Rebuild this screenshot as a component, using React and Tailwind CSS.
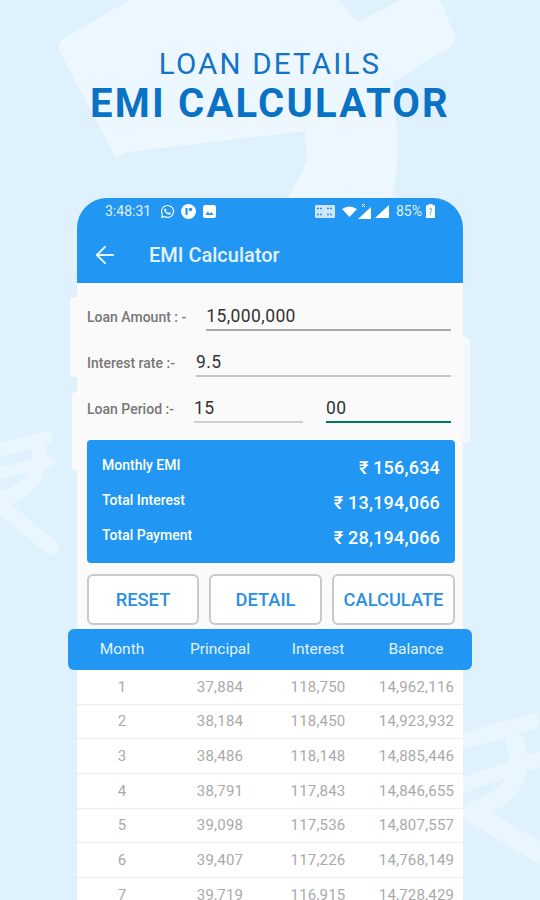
import React from "react";
import { ArrowLeft } from "lucide-react";
import { FaWhatsapp } from "react-icons/fa";

const rows = [
  ["1", "37,884", "118,750", "14,962,116"],
  ["2", "38,184", "118,450", "14,923,932"],
  ["3", "38,486", "118,148", "14,885,446"],
  ["4", "38,791", "117,843", "14,846,655"],
  ["5", "39,098", "117,536", "14,807,557"],
  ["6", "39,407", "117,226", "14,768,149"],
  ["7", "39,719", "116,915", "14,728,429"],
];

const summary = [
  ["Monthly EMI", "₹ 156,634"],
  ["Total Interest", "₹ 13,194,066"],
  ["Total Payment", "₹ 28,194,066"],
];

const buttons = [
  ["RESET", "w-[112px]"],
  ["DETAIL", "w-[113px]"],
  ["CALCULATE", "w-[123px]"],
];

// faint rupee signs behind the phone
const Backdrop = () => (
  <svg className="absolute inset-0" width="540" height="900" viewBox="0 0 540 900">
    <path
      d="M60 52 Q56 43 66 37 L130 0 L338 0 L358 22 L400 0 L440 0 L455 36 Q457 43 450 47 L393 82 L397 131 Q400 160 390 210 L282 210 L307 162 L305 131 L128 152 Q116 155 117 160 Z"
      fill="#edf7ff"
    />
    <g fill="none" stroke="#eaf6ff" strokeLinecap="round">
      <path d="M-10 452 L46 438" strokeWidth="13" />
      <path d="M-10 475 L50 462" strokeWidth="11" />
      <path d="M38 445 Q46 485 0 500" strokeWidth="15" />
      <path d="M0 505 L52 548" strokeWidth="15" />
      <path d="M460 742 L531 722" strokeWidth="16" />
      <path d="M460 786 L545 757" strokeWidth="15" />
      <path d="M515 743 Q530 790 473 812" strokeWidth="18" />
      <path d="M473 813 L545 856" strokeWidth="20" />
    </g>
    <rect x="70" y="297" width="20" height="80" rx="4" fill="#fafafa" />
    <rect x="72" y="392" width="20" height="78" rx="4" fill="#fafafa" />
    <path d="M455 337 L466 337 Q470 338 470 342 L470 442 L455 442 Z" fill="#f3f9fe" />
  </svg>
);

const Field = ({ label, children, className }) => (
  <div className={`flex items-end pr-[4px] ${className || ""}`}>
    <span className="text-[14px] font-medium text-[#777] pb-[3px]">{label}</span>
    {children}
  </div>
);

const inputClass = "border-b-2 text-[17.5px] leading-[26px] text-[#333] tracking-[0.4px]";

const StatusBar = () => (
  <div className="mt-[6px] flex items-center justify-between h-[14px] text-[14px] text-[#e3f2fd]">
    <div className="flex items-center">
      <span>3:48:31</span>
      <FaWhatsapp size={15} className="ml-[9px] text-white" />
      <svg className="ml-[6px]" width="15" height="15" viewBox="0 0 15 15">
        <circle cx="7.5" cy="7.5" r="7.5" fill="#fff" />
        <path d="M5.5 4v7" stroke="#2196f3" strokeWidth="2.2" />
        <circle cx="9.5" cy="5.5" r="1.8" fill="#2196f3" />
      </svg>
      <svg className="ml-[7px]" width="13" height="13" viewBox="0 0 13 13">
        <rect width="13" height="13" rx="2" fill="#fff" />
        <path d="M2.5 10l2.2-3.5 2 2.2 1.8-1.8 2 3.1z" fill="#2196f3" />
      </svg>
    </div>
    <div className="flex items-center">
      <svg width="20" height="13" viewBox="0 0 20 13">
        <rect width="20" height="13" rx="1" fill="#cfe6fb" />
        <path d="M2 3.5h6M12 3.5h6M2 9.5h6M12 9.5h6" stroke="#2196f3" strokeWidth="1.6" strokeDasharray="2 1" />
      </svg>
      <svg className="ml-[7px]" width="15" height="11" viewBox="0 0 15 11">
        <path d="M0 3 Q7.5 -2 15 3 L7.5 11Z" fill="#fff" />
      </svg>
      <svg width="14" height="15" viewBox="0 0 14 15">
        <path d="M14 3V15H1Z" fill="#fff" />
        <path d="M5 0l3 3M8 0L5 3" stroke="#fff" strokeWidth="0.9" />
      </svg>
      <svg className="ml-[4px]" width="14" height="13" viewBox="0 0 14 13">
        <path d="M14 0V13H0Z" fill="#fff" />
      </svg>
      <span className="ml-[7px]">85%</span>
      <svg className="ml-[4px]" width="9" height="14" viewBox="0 0 9 14">
        <path d="M2.5 0h4v1.2H9V14H0V1.2h2.5z" fill="#fff" />
        <path d="M3.2 5.2Q4.5 3.8 5.8 5.2Q6 6.4 4.5 7.6V9M4.5 10v1" fill="none" stroke="#2196f3" strokeWidth="0.9" />
      </svg>
    </div>
  </div>
);

export default function App() {
  return (
    <div className="relative w-[540px] h-[900px] overflow-hidden bg-[#dff1fd] font-['Roboto',sans-serif]">
      <Backdrop />
      <div className="relative flex flex-col items-center">
        <div className="mt-[46px] text-[29.5px] leading-[36px] tracking-[2.2px] text-[#1473c4]">LOAN DETAILS</div>
        <div className="mt-[1px] text-[40px] leading-[42px] tracking-[2.2px] font-bold text-[#0a72c4]">EMI CALCULATOR</div>

        <div className="mt-[73px] w-[386px] flex flex-col">
          <div className="h-[85px] bg-[#2196f3] rounded-t-[30px] px-[28px] flex flex-col">
            <StatusBar />
            <div className="mt-[22px] flex items-center text-[#e3f2fd]">
              <ArrowLeft size={28} strokeWidth={1.7} className="-ml-[14px]" />
              <span className="ml-[30px] text-[20px] font-medium">EMI Calculator</span>
            </div>
          </div>

          <div className="bg-[#fafafa] pl-[10px] pr-[8px] pt-[20px] pb-[4px]">
            <Field label="Loan Amount : -">
              <div className={`ml-[20px] flex-1 border-[#aaa] ${inputClass}`}>15,000,000</div>
            </Field>
            <Field label="Interest rate :-" className="mt-[18px]">
              <div className={`ml-[21px] flex-1 border-[#c4c4c4] ${inputClass}`}>9.5</div>
            </Field>
            <Field label="Loan Period :-" className="mt-[18px]">
              <div className={`ml-[20px] w-[109px] border-[#cfcfcf] ${inputClass}`}>15</div>
              <div className={`ml-[23px] flex-1 border-[#00795c] ${inputClass}`}>00</div>
            </Field>

            <div className="mt-[17px] h-[123px] bg-[#2196f3] rounded-[4px] px-[15px] pt-[10px] text-white">
              {summary.map(([k, v]) => (
                <div key={k} className="h-[35px] flex justify-between items-center">
                  <span className="text-[14px] font-medium -mt-[5px]">{k}</span>
                  <span className="text-[18px] font-medium tracking-[0.2px]">{v}</span>
                </div>
              ))}
            </div>

            <div className="mt-[11px] flex gap-[10px]">
              {buttons.map(([b, w]) => (
                <button key={b} className={`${w} h-[51px] bg-white border-2 border-[#c9c9c9] rounded-[6px] text-[18.3px] font-medium text-[#2b8fe3]`}>{b}</button>
              ))}
            </div>
          </div>

          <div className="relative -mx-[9px] h-[41px] bg-[#2196f3] rounded-[6px] grid grid-cols-[98px_98px_98px_98px] items-center text-center text-[15.5px] text-[#e3f2fd] pl-[5px]">
            {["Month", "Principal", "Interest", "Balance"].map((h) => (
              <span key={h}>{h}</span>
            ))}
          </div>

          <div className="bg-white">
            {rows.map((r) => (
              <div key={r[0]} className="h-[34.7px] border-b border-[#eeeeee] grid grid-cols-[98px_98px_98px_99px] -ml-[4px] items-center text-center text-[15px] tracking-[0.2px] text-[#aaaaaa]">
                {r.map((c, i) => (
                  <span key={i}>{c}</span>
                ))}
              </div>
            ))}
          </div>
        </div>
      </div>
    </div>
  );
}
